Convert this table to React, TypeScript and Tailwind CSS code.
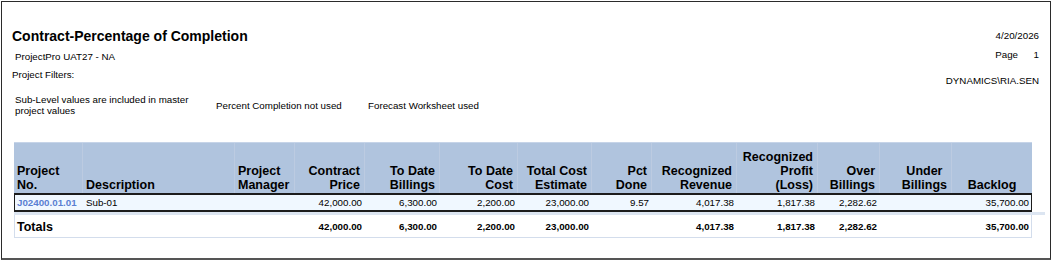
import React from "react";

type Col = {
  label: string[];
  align: "left" | "right" | "center" | "stack";
  row: string;
  total: string;
};

const cols: Col[] = [
  { label: ["Project", "No."], align: "left", row: "J02400.01.01", total: "Totals" },
  { label: ["Description"], align: "left", row: "Sub-01", total: "" },
  { label: ["Project", "Manager"], align: "left", row: "", total: "" },
  { label: ["Contract", "Price"], align: "right", row: "42,000.00", total: "42,000.00" },
  { label: ["To Date", "Billings"], align: "right", row: "6,300.00", total: "6,300.00" },
  { label: ["To Date", "Cost"], align: "right", row: "2,200.00", total: "2,200.00" },
  { label: ["Total Cost", "Estimate"], align: "right", row: "23,000.00", total: "23,000.00" },
  { label: ["Pct", "Done"], align: "right", row: "9.57", total: "" },
  { label: ["Recognized", "Revenue"], align: "right", row: "4,017.38", total: "4,017.38" },
  { label: ["Recognized", "Profit", "(Loss)"], align: "right", row: "1,817.38", total: "1,817.38" },
  { label: ["Over", "Billings"], align: "right", row: "2,282.62", total: "2,282.62" },
  { label: ["Under", "Billings"], align: "stack", row: "", total: "" },
  { label: ["Backlog"], align: "center", row: "35,700.00", total: "35,700.00" },
];

const grid =
  "grid grid-cols-[69px_152px_60px_70px_75px_78px_74px_60px_85px_81px_62px_72px_80px]";

const HeaderCell = ({ col, last }: { col: Col; last: boolean }) => {
  const text = col.label.map((l) => <div key={l}>{l}</div>);
  return (
    <div
      className={
        "flex flex-col justify-end pb-[1px] text-[12.5px] leading-[14px] font-bold text-black " +
        (last ? "" : "border-r border-[#bccbe1] ") +
        (col.align === "left"
          ? "pl-[3px] text-left"
          : col.align === "center"
          ? "text-center"
          : col.align === "stack"
          ? "items-end pr-[4px]"
          : "pr-[4px] text-right")
      }
    >
      {col.align === "stack" ? <div className="text-center">{text}</div> : text}
    </div>
  );
};

export default function App() {
  return (
    <div
      className="w-[1054px] h-[262px] bg-white overflow-hidden"
      style={{ fontFamily: '"Liberation Sans", Arial, sans-serif' }}
    >
      <div className="ml-[1px] mt-[1px] w-[1050px] h-[259px] border border-[#2b2b2b] border-b-2 border-b-[#555] pt-[26px] pl-[10px] pr-[11px] text-black">
        {/* report header */}
        <div className="h-[114px] flex justify-between">
          <div className="flex flex-col">
            <div className="text-[14px] leading-[16px] font-bold">
              Contract-Percentage of Completion
            </div>
            <div className="mt-[7px] ml-[3px] text-[9.75px] leading-[12px]">
              ProjectPro UAT27 - NA
            </div>
            <div className="mt-[6px] text-[9.75px] leading-[12px]">Project Filters:</div>
            <div className="mt-[13px] ml-[3px] flex items-center text-[9.75px] leading-[11px]">
              <div className="w-[201px]">
                Sub-Level values are included in master project values
              </div>
              <div className="w-[152px]">Percent Completion not used</div>
              <div>Forecast Worksheet used</div>
            </div>
          </div>
          <div className="flex flex-col items-end pt-[2px] text-[9.75px] leading-[12px]">
            <div>4/20/2026</div>
            <div className="mt-[7px] flex">
              <span>Page</span>
              <span className="w-[21px] text-right">1</span>
            </div>
            <div className="mt-[14px]">DYNAMICS\RIA.SEN</div>
          </div>
        </div>

        {/* table */}
        <div className="ml-[2px] w-[1031px]">
          <div className={grid + " w-[1018px] h-[51px] bg-[#b0c4de] border-t border-[#c6d4e8]"}>
            {cols.map((c, i) => (
              <HeaderCell key={i} col={c} last={i === cols.length - 1} />
            ))}
          </div>
          <div
            className={
              grid +
              " w-[1018px] h-[19px] bg-[#f0f8ff] border-y-2 border-[#1c1c1c] shadow-[inset_1px_0_0_#1c1c1c,inset_-1px_0_0_#1c1c1c] items-center text-[9.75px] leading-[12px]"
            }
          >
            {cols.map((c, i) =>
              i === 0 ? (
                <div key={i} className="pl-[3px] font-bold text-[#5a7fd2]">
                  {c.row}
                </div>
              ) : (
                <div
                  key={i}
                  className={c.align === "left" ? "pl-[3px]" : "pr-[3px] text-right"}
                >
                  {c.row}
                </div>
              )
            )}
          </div>
          <div className="h-[3px] w-[1031px] bg-[#dce5f1]" />
          <div
            className={
              grid +
              " w-[1018px] h-[23px] bg-white border-b border-[#d3ddec] shadow-[inset_1px_0_0_#d3ddec,inset_-1px_0_0_#d3ddec] items-center font-bold"
            }
          >
            {cols.map((c, i) =>
              i === 0 ? (
                <div key={i} className="pl-[3px] pt-[1px] text-[12.5px] leading-[14px]">
                  {c.total}
                </div>
              ) : (
                <div
                  key={i}
                  className={
                    "pt-[1px] text-[9.75px] leading-[12px] " +
                    (c.align === "left" ? "pl-[3px]" : "pr-[3px] text-right")
                  }
                >
                  {c.total}
                </div>
              )
            )}
          </div>
        </div>
      </div>
    </div>
  );
}
